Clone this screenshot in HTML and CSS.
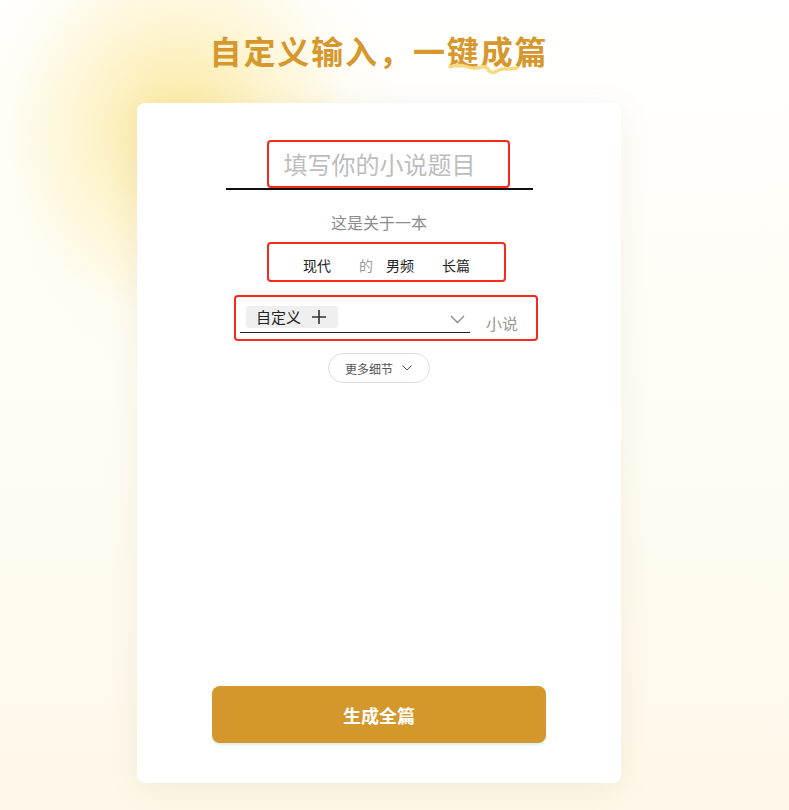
FILE: index.html
```html
<!DOCTYPE html>
<html lang="zh-CN">
<head>
<meta charset="utf-8">
<title>自定义输入，一键成篇</title>
<link rel="stylesheet" href="styles.css">
</head>
<body>
<main class="page">
  <h1 class="headline">自定义输入，一<span class="hl">键成<svg class="squiggle" width="72" height="14" viewBox="0 0 72 14"><path d="M2 5 C8 2 14 3 20 5 C26 7 30 6 34 5 C38 4 40 6 41 9 C42 11 46 11 49 9 C53 6 56 7 60 7 L69 6" fill="none" stroke="#f8d97f" stroke-width="3.4" stroke-linecap="round"/></svg></span>篇</h1>
  <section class="card">
    <div class="title-field">
      <div class="mark mark-title"><span class="placeholder">填写你的小说题目</span></div>
    </div>
    <p class="lead">这是关于一本</p>
    <div class="mark mark-meta">
      <span class="opt">现代</span><span class="de">的</span><span class="opt">男频</span><span class="opt last">长篇</span>
    </div>
    <div class="mark mark-genre">
      <div class="genre-field">
        <span class="tag">自定义<svg class="plus" width="16" height="16" viewBox="0 0 16 16"><path d="M1 8 H15 M8 1 V15" stroke="#333" stroke-width="1.6" fill="none"/></svg></span>
        <svg class="chev" width="15" height="9" viewBox="0 0 15 9"><path d="M1 1 L7.5 7.5 L14 1" stroke="#8a8a8a" stroke-width="1.3" fill="none"/></svg>
      </div>
      <span class="suffix">小说</span>
    </div>
    <button class="more">更多细节<svg width="10" height="6" viewBox="0 0 10 6"><path d="M0.5 0.5 L5 5 L9.5 0.5" stroke="#555" stroke-width="1" fill="none"/></svg></button>
    <button class="generate">生成全篇</button>
  </section>
</main>
</body>
</html>
```
FILE: styles.css
```css
* { box-sizing: border-box; }
html, body { margin: 0; padding: 0; }
body {
  width: 789px;
  height: 810px;
  overflow: hidden;
  font-family: "Noto Sans CJK SC", "Noto Sans", sans-serif;
  background:
    radial-gradient(ellipse 230px 250px at 180px 130px, rgba(251,228,140,0.85) 0%, rgba(252,236,170,0.55) 40%, rgba(254,246,215,0.18) 75%, rgba(255,252,240,0) 100%),
    linear-gradient(to bottom, #ffffff 0%, #fffdf5 40%, #fdf8e9 100%);
}
.page {
  width: 758px;
  display: flex;
  flex-direction: column;
  align-items: center;
  padding-top: 28px;
}
.headline {
  margin: 0;
  font-size: 32px;
  line-height: 44px;
  letter-spacing: 1.9px;
  font-weight: 700;
  color: #d6982d;
}
.hl { position: relative; }
.squiggle {
  position: absolute;
  left: 1px;
  top: 35px;
}
.card {
  margin-top: 31px;
  width: 484px;
  height: 680px;
  background: #fff;
  border-radius: 8px;
  box-shadow: 0 6px 30px rgba(140, 120, 60, 0.10);
  display: flex;
  flex-direction: column;
  align-items: center;
  padding: 37px 0 40px;
}
.mark {
  border: 2px solid #f8281d;
  border-radius: 4px;
}
.title-field {
  width: 307px;
  border-bottom: 2px solid #111;
  display: flex;
  justify-content: center;
}
.mark-title {
  width: 243px;
  height: 48px;
  margin-left: 18px;
  padding-left: 15px;
  display: flex;
  align-items: center;
}
.placeholder {
  font-size: 24px;
  color: #bdbdbd;
  line-height: 30px;
}
.lead {
  margin: 22px 0 0;
  font-size: 16px;
  line-height: 20px;
  color: #8c8c8c;
}
.mark-meta {
  margin-top: 10px;
  margin-left: 15px;
  width: 239px;
  height: 40px;
  padding-top: 11px;
  display: flex;
  justify-content: center;
  font-size: 14px;
  line-height: 20px;
  color: #222;
}
.opt { margin-right: 28px; }
.opt.last { margin-right: 0; }
.de { margin-right: 13px; color: #999; }
.mark-genre {
  margin-top: 13px;
  margin-left: 14px;
  width: 304px;
  height: 46px;
  padding: 9px 0 0 4px;
  display: flex;
}
.genre-field {
  width: 230px;
  height: 27px;
  border-bottom: 1px solid #222;
  display: flex;
  align-items: flex-start;
}
.tag {
  margin-left: 6px;
  height: 22px;
  width: 92px;
  padding: 0 10px;
  background: #efefef;
  border-radius: 4px;
  display: flex;
  align-items: center;
  gap: 10px;
  font-size: 15px;
  line-height: 22px;
  color: #222;
}
.chev {
  margin-left: auto;
  margin-right: 5px;
  margin-top: 9px;
}
.suffix {
  margin-left: 16px;
  margin-top: 7px;
  font-size: 16px;
  line-height: 20px;
  color: #999;
}
.more {
  margin-top: 12px;
  width: 102px;
  height: 30px;
  border: 1px solid #dcdcdc;
  border-radius: 15px;
  background: #fff;
  padding: 0 0 0 16px;
  display: flex;
  align-items: center;
  gap: 9px;
  font-family: inherit;
  font-size: 12px;
  color: #555;
}
.generate {
  margin-top: auto;
  width: 334px;
  height: 57px;
  border: none;
  border-radius: 8px;
  background: #d4972b;
  color: #fff;
  font-family: inherit;
  font-size: 18px;
  font-weight: 700;
  box-shadow: 0 2px 2px rgba(160, 210, 190, 0.35);
}
```
